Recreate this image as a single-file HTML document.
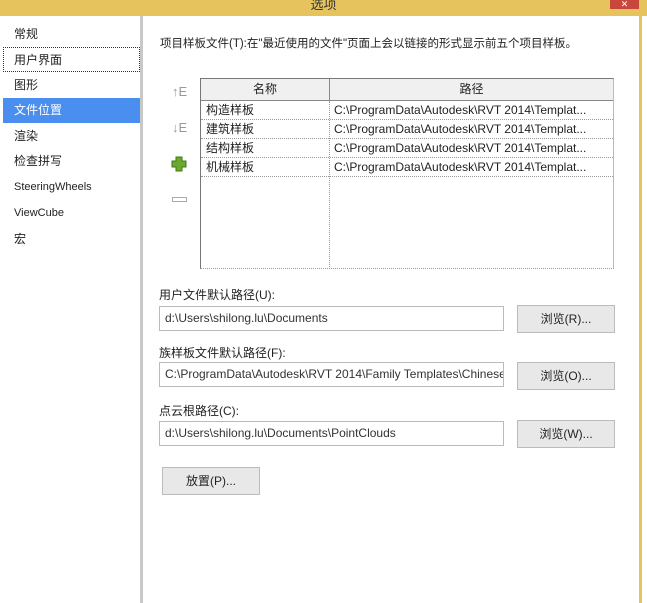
<!DOCTYPE html>
<html><head><meta charset="utf-8"><style>
*{margin:0;padding:0;box-sizing:border-box}
body{width:647px;height:603px;background:#fff;position:relative;overflow:hidden;font-family:"Liberation Sans","Noto Sans CJK SC",sans-serif;font-size:12px;color:#222}
.a{position:absolute}
.title{left:0;top:0;width:647px;height:16px;background:#e6c35c;text-align:center;font-size:13px;line-height:10px;color:#333}
.close{left:610px;top:0;width:29px;height:9px;background:#c9473a;color:#fff;font-size:9px;line-height:8px;text-align:center}
.side{left:3px;top:16px;width:140px;height:587px;background:#fff;border-right:3px solid #c8c8c8}
.it{position:absolute;left:0;width:137px;height:25px;padding-left:11px;line-height:25px;font-size:12px}
.sel{background:#4a8ff0;color:#fff}
.dot{border:1px dotted #333;padding-left:10px}
.rb{left:639px;top:16px;width:3px;height:587px;background:#e6c35c}
.tbl{left:200px;top:78px;width:414px;height:191px;border:1px solid #777;border-right-color:#bbb;border-bottom:1px dotted #999}
.hd{position:absolute;top:0;height:22px;background:#f0f0f0;border-bottom:1px solid #888;text-align:center;line-height:21px}
.row{position:absolute;left:0;width:412px;height:19px;border-bottom:1px dotted #999;line-height:18px}
.row span{position:absolute;left:5px}
.row span+span{left:133px}
.inp{left:159px;width:345px;height:25px;border:1px solid #bbb;padding-left:5px;line-height:23px;font-size:12px;white-space:nowrap;overflow:hidden;color:#333}
.btn{width:98px;height:28px;background:#e8e8e8;border:1px solid #bbb;text-align:center;line-height:26px;font-size:12px}
.lbl{left:159px;font-size:12px}
</style></head><body>
<div class="a title">选项</div>
<div class="a close">✕</div>
<div class="a side">
<div class="it" style="top:6px">常规</div>
<div class="it dot" style="top:31px">用户界面</div>
<div class="it" style="top:57px">图形</div>
<div class="it sel" style="top:82px">文件位置</div>
<div class="it" style="top:108px">渲染</div>
<div class="it" style="top:133px">检查拼写</div>
<div class="it" style="top:159px;font-size:11px">SteeringWheels</div>
<div class="it" style="top:185px;font-size:11px">ViewCube</div>
<div class="it" style="top:211px">宏</div>
</div>
<div class="a rb"></div>
<div class="a" style="left:160px;top:35px;font-size:11.5px">项目样板文件(T):在"最近使用的文件"页面上会以链接的形式显示前五个项目样板。</div>
<div class="a" style="left:172px;top:84px;color:#999;font-size:13px">↑E</div>
<div class="a" style="left:172px;top:120px;color:#999;font-size:13px">↓E</div>
<svg class="a" style="left:171px;top:156px" width="16" height="16"><path d="M5 1h6v4h4v6h-4v4H5v-4H1V5h4z" fill="#6aa82e" stroke="#3f7a1a"/></svg>
<div class="a" style="left:172px;top:197px;width:15px;height:5px;border:1px solid #aaa"></div>
<div class="a tbl">
<div class="hd" style="left:0;width:129px;border-right:1px solid #888">名称</div>
<div class="hd" style="left:129px;width:283px">路径</div>
<div class="a" style="left:128px;top:22px;height:168px;border-left:1px dotted #999"></div>
<div class="row" style="top:22px"><span>构造样板</span><span>C:\ProgramData\Autodesk\RVT 2014\Templat...</span></div>
<div class="row" style="top:41px"><span>建筑样板</span><span>C:\ProgramData\Autodesk\RVT 2014\Templat...</span></div>
<div class="row" style="top:60px"><span>结构样板</span><span>C:\ProgramData\Autodesk\RVT 2014\Templat...</span></div>
<div class="row" style="top:79px"><span>机械样板</span><span>C:\ProgramData\Autodesk\RVT 2014\Templat...</span></div>
</div>
<div class="a lbl" style="top:286px">用户文件默认路径(U):</div>
<div class="a inp" style="top:306px">d:\Users\shilong.lu\Documents</div>
<div class="a btn" style="left:517px;top:305px">浏览(R)...</div>
<div class="a lbl" style="top:344px">族样板文件默认路径(F):</div>
<div class="a inp" style="top:362px">C:\ProgramData\Autodesk\RVT 2014\Family Templates\Chinese</div>
<div class="a btn" style="left:517px;top:362px">浏览(O)...</div>
<div class="a lbl" style="top:402px">点云根路径(C):</div>
<div class="a inp" style="top:421px">d:\Users\shilong.lu\Documents\PointClouds</div>
<div class="a btn" style="left:517px;top:420px">浏览(W)...</div>
<div class="a btn" style="left:162px;top:467px">放置(P)...</div>
</body></html>
